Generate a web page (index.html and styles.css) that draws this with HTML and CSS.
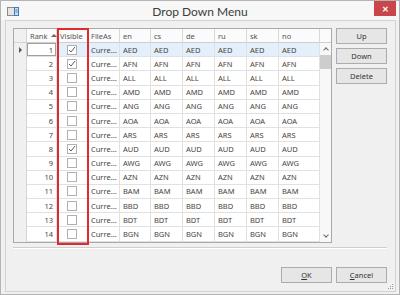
FILE: index.html
```html
<!DOCTYPE html>
<html lang="en">

<head>
    <meta charset="UTF-8">
    <title>Drop Down Menu</title>
    <link rel="stylesheet" href="styles.css">
</head>

<body>
    <div class="window">
        <div class="titlebar">
            <svg class="app-icon" width="12" height="9" viewBox="0 0 12 9">
                <rect x="0.5" y="0.5" width="11" height="8" fill="#e4e4e4" stroke="#8a8a8a" />
                <rect x="7.5" y="0.5" width="4" height="8" fill="#cfe0f1" stroke="#3d7ab8" />
                <line x1="8.5" y1="3" x2="10.5" y2="3" stroke="#3d7ab8" />
                <line x1="8.5" y1="5" x2="10.5" y2="5" stroke="#3d7ab8" />
            </svg>
            <span class="title">Drop Down Menu</span>
            <div class="close">&#x2715;</div>
        </div>

        <div class="frame">
            <div class="main">
                <div class="grid-wrap">
                    <div class="grid">
                        <!-- header -->
                        <div class="ind hd"></div>
                        <div class="hc">Rank <span class="sort"></span></div>
                        <div class="hc">Visible</div>
                        <div class="hc">FileAs</div>
                        <div class="hc">en</div>
                        <div class="hc">cs</div>
                        <div class="hc">de</div>
                        <div class="hc">ru</div>
                        <div class="hc">sk</div>
                        <div class="hc">no</div>
                        <div class="hc last"></div>

                        <div class="scroll">
                            <span class="arrow up"></span>
                            <span class="thumb"></span>
                            <span class="track"></span>
                            <span class="arrow down"></span>
                        </div>

                        <div class="row sel">
                            <div class="ind"><span class="pointer"></span></div>
                            <div class="c rank">1</div>
                            <div class="c vis"><span class="cb"><svg width="8" height="7" viewBox="0 0 8 7"><polyline points="1,4 3,6 7,1" fill="none" stroke="#5a5a5a" stroke-width="1" /></svg></span></div>
                            <div class="c">Curre...</div>
                            <div class="c">AED</div><div class="c">AED</div><div class="c">AED</div>
                            <div class="c">AED</div><div class="c">AED</div><div class="c">AED</div>
                        </div>
                        <div class="row">
                            <div class="ind"></div>
                            <div class="c rank">2</div>
                            <div class="c vis"><span class="cb"><svg width="8" height="7" viewBox="0 0 8 7"><polyline points="1,4 3,6 7,1" fill="none" stroke="#5a5a5a" stroke-width="1" /></svg></span></div>
                            <div class="c">Curre...</div>
                            <div class="c">AFN</div><div class="c">AFN</div><div class="c">AFN</div>
                            <div class="c">AFN</div><div class="c">AFN</div><div class="c">AFN</div>
                        </div>
                        <div class="row">
                            <div class="ind"></div>
                            <div class="c rank">3</div>
                            <div class="c vis"><span class="cb"></span></div>
                            <div class="c">Curre...</div>
                            <div class="c">ALL</div><div class="c">ALL</div><div class="c">ALL</div>
                            <div class="c">ALL</div><div class="c">ALL</div><div class="c">ALL</div>
                        </div>
                        <div class="row">
                            <div class="ind"></div>
                            <div class="c rank">4</div>
                            <div class="c vis"><span class="cb"></span></div>
                            <div class="c">Curre...</div>
                            <div class="c">AMD</div><div class="c">AMD</div><div class="c">AMD</div>
                            <div class="c">AMD</div><div class="c">AMD</div><div class="c">AMD</div>
                        </div>
                        <div class="row">
                            <div class="ind"></div>
                            <div class="c rank">5</div>
                            <div class="c vis"><span class="cb"></span></div>
                            <div class="c">Curre...</div>
                            <div class="c">ANG</div><div class="c">ANG</div><div class="c">ANG</div>
                            <div class="c">ANG</div><div class="c">ANG</div><div class="c">ANG</div>
                        </div>
                        <div class="row">
                            <div class="ind"></div>
                            <div class="c rank">6</div>
                            <div class="c vis"><span class="cb"></span></div>
                            <div class="c">Curre...</div>
                            <div class="c">AOA</div><div class="c">AOA</div><div class="c">AOA</div>
                            <div class="c">AOA</div><div class="c">AOA</div><div class="c">AOA</div>
                        </div>
                        <div class="row">
                            <div class="ind"></div>
                            <div class="c rank">7</div>
                            <div class="c vis"><span class="cb"></span></div>
                            <div class="c">Curre...</div>
                            <div class="c">ARS</div><div class="c">ARS</div><div class="c">ARS</div>
                            <div class="c">ARS</div><div class="c">ARS</div><div class="c">ARS</div>
                        </div>
                        <div class="row">
                            <div class="ind"></div>
                            <div class="c rank">8</div>
                            <div class="c vis"><span class="cb"><svg width="8" height="7" viewBox="0 0 8 7"><polyline points="1,4 3,6 7,1" fill="none" stroke="#5a5a5a" stroke-width="1" /></svg></span></div>
                            <div class="c">Curre...</div>
                            <div class="c">AUD</div><div class="c">AUD</div><div class="c">AUD</div>
                            <div class="c">AUD</div><div class="c">AUD</div><div class="c">AUD</div>
                        </div>
                        <div class="row">
                            <div class="ind"></div>
                            <div class="c rank">9</div>
                            <div class="c vis"><span class="cb"></span></div>
                            <div class="c">Curre...</div>
                            <div class="c">AWG</div><div class="c">AWG</div><div class="c">AWG</div>
                            <div class="c">AWG</div><div class="c">AWG</div><div class="c">AWG</div>
                        </div>
                        <div class="row">
                            <div class="ind"></div>
                            <div class="c rank">10</div>
                            <div class="c vis"><span class="cb"></span></div>
                            <div class="c">Curre...</div>
                            <div class="c">AZN</div><div class="c">AZN</div><div class="c">AZN</div>
                            <div class="c">AZN</div><div class="c">AZN</div><div class="c">AZN</div>
                        </div>
                        <div class="row">
                            <div class="ind"></div>
                            <div class="c rank">11</div>
                            <div class="c vis"><span class="cb"></span></div>
                            <div class="c">Curre...</div>
                            <div class="c">BAM</div><div class="c">BAM</div><div class="c">BAM</div>
                            <div class="c">BAM</div><div class="c">BAM</div><div class="c">BAM</div>
                        </div>
                        <div class="row">
                            <div class="ind"></div>
                            <div class="c rank">12</div>
                            <div class="c vis"><span class="cb"></span></div>
                            <div class="c">Curre...</div>
                            <div class="c">BBD</div><div class="c">BBD</div><div class="c">BBD</div>
                            <div class="c">BBD</div><div class="c">BBD</div><div class="c">BBD</div>
                        </div>
                        <div class="row">
                            <div class="ind"></div>
                            <div class="c rank">13</div>
                            <div class="c vis"><span class="cb"></span></div>
                            <div class="c">Curre...</div>
                            <div class="c">BDT</div><div class="c">BDT</div><div class="c">BDT</div>
                            <div class="c">BDT</div><div class="c">BDT</div><div class="c">BDT</div>
                        </div>
                        <div class="row">
                            <div class="ind"></div>
                            <div class="c rank">14</div>
                            <div class="c vis"><span class="cb"></span></div>
                            <div class="c">Curre...</div>
                            <div class="c">BGN</div><div class="c">BGN</div><div class="c">BGN</div>
                            <div class="c">BGN</div><div class="c">BGN</div><div class="c">BGN</div>
                        </div>
                    </div>

                    <!-- highlight around the Visible column -->
                    <div class="mark"></div>
                </div>

                <div class="side-buttons">
                    <button>Up</button>
                    <button>Down</button>
                    <button>Delete</button>
                </div>
            </div>

            <div class="separator"></div>

            <div class="footer">
                <button><u>O</u>K</button>
                <button><u>C</u>ancel</button>
            </div>

            <svg class="grip" width="7" height="7" viewBox="0 0 7 7">
                <rect x="5" y="1" width="1" height="1" fill="#9a9a9a" />
                <rect x="3" y="3" width="1" height="1" fill="#9a9a9a" />
                <rect x="5" y="3" width="1" height="1" fill="#9a9a9a" />
                <rect x="1" y="5" width="1" height="1" fill="#9a9a9a" />
                <rect x="3" y="5" width="1" height="1" fill="#9a9a9a" />
                <rect x="5" y="5" width="1" height="1" fill="#9a9a9a" />
            </svg>
        </div>
    </div>
</body>

</html>
```

FILE: styles.css
```css
* {
    box-sizing: border-box;
}

body {
    margin: 0;
    font-family: "Noto Sans", "Open Sans", sans-serif;
    color: #444;
}

.window {
    width: 400px;
    height: 295px;
    border: 1px solid #b4b4b4;
    background-color: #f0f0f0;
    display: flex;
    flex-direction: column;
}

.titlebar {
    height: 19px;
    display: grid;
    grid-template-columns: 1fr auto 1fr;
    align-items: start;
    background-color: #f7f7f7;
}

.app-icon {
    margin: 6px 0 0 6px;
}

.title {
    font-family: Lato, "Noto Sans", sans-serif;
    font-size: 12px;
    line-height: 14px;
    padding-top: 4px;
    color: #3c3c3c;
}

.close {
    justify-self: end;
    width: 22px;
    height: 15px;
    margin-right: 3px;
    background-color: #c9474b;
    color: #fff;
    font-size: 8px;
    font-weight: bold;
    display: flex;
    align-items: center;
    justify-content: center;
}

.frame {
    position: relative;
    flex: 1;
    margin: 0 3px 2px 4px;
    border: 1px solid #d2d2d2;
    padding: 7px 8px 0 7px;
    display: flex;
    flex-direction: column;
}

.main {
    display: flex;
    gap: 4px;
}

.grid-wrap {
    position: relative;
}

.grid {
    display: grid;
    grid-template-columns: 13px 30px 31px 32px 31px 32px 32px 32px 32px 41px 11px;
    grid-template-rows: 14px repeat(14, 14.2px);
    border: 1px solid #a9a9a9;
    background-color: #fff;
    font-size: 7.5px;
}

.row {
    display: contents;
}

.ind {
    background-color: #f0f0f0;
    border-right: 1px solid #d4d4d4;
    display: flex;
    align-items: center;
    justify-content: center;
}

.ind.hd {
    border-bottom: 1px solid #d4d4d4;
}

.pointer {
    width: 0;
    height: 0;
    border-top: 3px solid transparent;
    border-bottom: 3px solid transparent;
    border-left: 3px solid #555;
}

.hc {
    background-color: #fbfbfb;
    border-right: 1px solid #d8d8d8;
    border-bottom: 1px solid #cfcfcf;
    padding-left: 3px;
    display: flex;
    align-items: center;
    color: #555;
    white-space: nowrap;
}

.hc.last {
    border-right: none;
}

.sort {
    width: 0;
    height: 0;
    margin-left: 3px;
    border-left: 3px solid transparent;
    border-right: 3px solid transparent;
    border-bottom: 3px solid #666;
}

.c {
    border-right: 1px solid #e1e1e1;
    border-bottom: 1px solid #e1e1e1;
    padding-left: 3px;
    display: flex;
    align-items: center;
    color: #444;
    white-space: nowrap;
    overflow: hidden;
}

.sel .c {
    background-color: #e3f0fb;
}

.sel .c.rank {
    background-color: #fff;
    box-shadow: inset 0 0 0 1px #a0a0a0;
}

.rank {
    justify-content: flex-end;
    padding-right: 3px;
}

.vis {
    justify-content: center;
    padding-left: 0;
}

.cb {
    width: 10px;
    height: 10px;
    border: 1px solid #b0b0b0;
    background-color: #fff;
    display: flex;
    align-items: center;
    justify-content: center;
}

.scroll {
    grid-column: 11;
    grid-row: 2 / span 14;
    background-color: #f8f8f8;
    display: flex;
    flex-direction: column;
    align-items: center;
}

.arrow {
    width: 4px;
    height: 4px;
    border-left: 1px solid #6a6a6a;
    border-top: 1px solid #6a6a6a;
}

.arrow.up {
    transform: rotate(45deg);
    margin: 5px 0 3px;
}

.arrow.down {
    transform: rotate(225deg);
    margin: 0 0 5px;
}

.thumb {
    width: 11px;
    height: 14px;
    background-color: #cdcdcd;
}

.track {
    flex: 1;
}

.mark {
    position: absolute;
    left: 44px;
    top: 0;
    width: 32px;
    height: 217px;
    border: 2px solid #e02a2f;
}

.side-buttons {
    display: flex;
    flex-direction: column;
    gap: 4px;
}

button {
    width: 51px;
    height: 16px;
    padding: 0;
    font-family: "Noto Sans", "Open Sans", sans-serif;
    font-size: 7.5px;
    color: #333;
    background-color: #e6e6e6;
    border: 1px solid #acacac;
    border-radius: 0;
}

.separator {
    margin-top: 4px;
    border-top: 1px solid #cfcfcf;
    border-bottom: 1px solid #fff;
}

.footer {
    margin-top: 18px;
    display: flex;
    justify-content: flex-end;
    gap: 4px;
}

.grip {
    position: absolute;
    right: 1px;
    bottom: 1px;
}
```
